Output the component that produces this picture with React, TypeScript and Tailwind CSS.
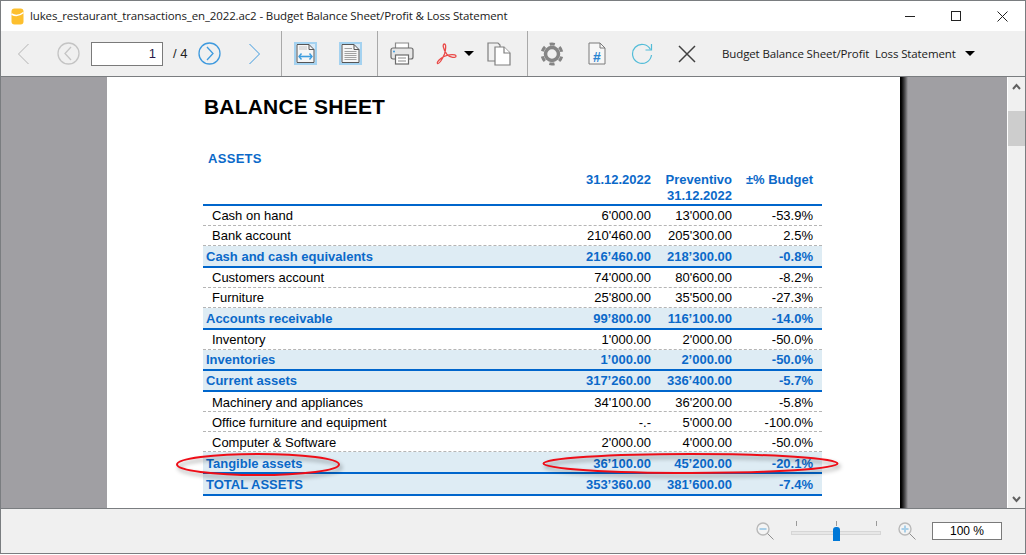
const rows = [
  { label: "Cash on hand", a: "6'000.00", b: "13'000.00", c: "-53.9%", kind: "plain", nudge: "" },
  { label: "Bank account", a: "210'460.00", b: "205'300.00", c: "2.5%", kind: "plain", nudge: "" },
  { label: "Cash and cash equivalents", a: "216’460.00", b: "218’300.00", c: "-0.8%", kind: "total", nudge: "pt-[2px]" },
  { label: "Customers account", a: "74'000.00", b: "80'600.00", c: "-8.2%", kind: "plain", nudge: "" },
  { label: "Furniture", a: "25'800.00", b: "35'500.00", c: "-27.3%", kind: "plain", nudge: "" },
  { label: "Accounts receivable", a: "99’800.00", b: "116’100.00", c: "-14.0%", kind: "total", nudge: "pt-[2px]" },
  { label: "Inventory", a: "1'000.00", b: "2'000.00", c: "-50.0%", kind: "plain", nudge: "" },
  { label: "Inventories", a: "1’000.00", b: "2’000.00", c: "-50.0%", kind: "short", nudge: "" },
  { label: "Current assets", a: "317’260.00", b: "336’400.00", c: "-5.7%", kind: "short", nudge: "" },
  { label: "Machinery and appliances", a: "34'100.00", b: "36'200.00", c: "-5.8%", kind: "plain", nudge: "pt-[2px]" },
  { label: "Office furniture and equipment", a: "-.-", b: "5'000.00", c: "-100.0%", kind: "plain", nudge: "pt-[2px]" },
  { label: "Computer & Software", a: "2'000.00", b: "4'000.00", c: "-50.0%", kind: "plain", nudge: "pt-[2px]" },
  { label: "Tangible assets", a: "36’100.00", b: "45’200.00", c: "-20.1%", kind: "total", nudge: "pt-[4px]" },
  { label: "TOTAL ASSETS", a: "353’360.00", b: "381’600.00", c: "-7.4%", kind: "total", nudge: "pt-[2px]" },
];

function Row({ r }: { r: (typeof rows)[number] }) {
  if (r.kind === "plain") {
    return (
      <div className={`flex h-[20px] items-center border-b border-dashed border-[#b5b5b5] pr-[9px] text-black ${r.nudge}`}>
        <div className="flex-1 pl-[9px]">{r.label}</div>
        <div className="w-[81px] text-right">{r.a}</div>
        <div className="w-[81px] text-right">{r.b}</div>
        <div className="w-[81px] text-right">{r.c}</div>
      </div>
    );
  }
  return (
    <div
      className={`flex items-center border-b-2 border-[#0066cc] bg-[#deecf4] pr-[9px] font-bold text-[#0b69c9] ${
        r.kind === "short" ? "h-[21px]" : "h-[22px]"
      } ${r.nudge}`}
    >
      <div className="flex-1 pl-[3px]">{r.label}</div>
      <div className="w-[81px] text-right">{r.a}</div>
      <div className="w-[81px] text-right">{r.b}</div>
      <div className="w-[81px] text-right">{r.c}</div>
    </div>
  );
}

function Sep() {
  return <div className="h-[45px] w-px bg-[#a9a9a9]" />;
}

function FitIcon({ width }: { width?: boolean }) {
  return (
    <div className="flex h-[23px] w-[23px] items-center justify-center border-2 border-[#a4d2f0] bg-[#d9eaf7]">
      <svg width="19" height="19" viewBox="0 0 19 19" fill="none">
        <path d="M1 0.5H13L18 5.5V18.5H1Z" fill="#f6f6f6" stroke="#555" />
        <path d="M13 0.5V5.5H18" stroke="#555" />
        {width ? (
          <>
            <path d="M3 3H11M3 5H11" stroke="#c8c8c8" />
            <path d="M3 12.5H16" stroke="#3d9ddf" strokeWidth="1.6" />
            <path d="M5.5 9.5L3 12.5L5.5 15.5M13.5 9.5L16 12.5L13.5 15.5" stroke="#3d9ddf" strokeWidth="1.4" />
          </>
        ) : (
          <path d="M3.5 4.5H11M3.5 7.5H15.5M3.5 9.5H15.5M3.5 11.5H15.5M3.5 13.5H15.5M3.5 15.5H15.5" stroke="#a2a2a2" />
        )}
      </svg>
    </div>
  );
}

function Caret() {
  return <div className="h-0 w-0 border-x-[5px] border-t-[5px] border-x-transparent border-t-black" />;
}

function ZoomIcon({ plus }: { plus?: boolean }) {
  return (
    <svg width="18" height="19" viewBox="0 0 18 19" fill="none">
      <circle cx="7" cy="7" r="6" fill="#f4f4f4" stroke="#b9b9b9" strokeWidth="1.4" />
      <path d="M3.5 7H10.5" stroke="#a9cfe8" strokeWidth="2" />
      {plus && <path d="M7 3.5V10.5" stroke="#a9cfe8" strokeWidth="2" />}
      <path d="M11.5 11.5L17.5 17.5" stroke="#8f8f8f" />
    </svg>
  );
}

export default function App() {
  return (
    <div className="relative h-[555px] w-[1026px] overflow-hidden bg-white font-['Liberation_Sans',sans-serif]">
      <div className="flex h-[554px] w-[1026px] flex-col border border-[#7a7d80] bg-white">
        {/* title bar */}
        <div className="flex h-[30px] shrink-0 items-center bg-white text-[#1a1a1a]">
          <svg className="ml-[10px]" width="13" height="17" viewBox="0 0 13 17">
            <rect x="0.5" y="0.5" width="12" height="16" rx="3" fill="#fdbf2d" />
            <path d="M0.5 6Q6.5 9.5 12.5 4.5" fill="none" stroke="#fff" strokeWidth="1.5" />
          </svg>
          <span className="ml-[6px] font-['Open_Sans',sans-serif] text-[11.5px] tracking-[-0.13px]">
            lukes_restaurant_transactions_en_2022.ac2 - Budget Balance Sheet/Profit &amp; Loss Statement
          </span>
          <div className="ml-auto flex items-center">
            <div className="h-px w-[10px] bg-[#222]" />
            <div className="ml-[36px] h-[10px] w-[10px] border border-[#222]" />
            <svg className="ml-[36px] mr-[17px]" width="11" height="11" viewBox="0 0 11 11" stroke="#222">
              <path d="M0.5 0.5L10.5 10.5M10.5 0.5L0.5 10.5" />
            </svg>
          </div>
        </div>

        {/* toolbar */}
        <div className="flex h-[45px] shrink-0 items-center bg-[#f0f0f0]">
          <svg className="ml-[17px]" width="12" height="24" viewBox="0 0 12 24" fill="none" stroke="#b3b3b3">
            <path d="M10.5 2L0.5 12L10.5 22" />
          </svg>
          <svg className="ml-[27px]" width="23" height="23" viewBox="0 0 23 23" fill="none" stroke="#c4c4c4" strokeWidth="1.3">
            <circle cx="11.5" cy="11.5" r="10.5" />
            <path d="M14 5L8 11.5L14 18" />
          </svg>
          <div className="ml-[11px] flex h-[24px] w-[72px] items-center justify-end border border-[#7a7a7a] bg-white pr-[6px] text-[13px] text-[#2b1a4a]">
            1
          </div>
          <span className="ml-[10px] w-[25px] text-[13px] text-[#222]">/ 4</span>
          <svg width="23" height="23" viewBox="0 0 23 23" fill="none" stroke="#3f9ade" strokeWidth="1.3">
            <circle cx="11.5" cy="11.5" r="10.5" />
            <path d="M9 5L15 11.5L9 18" />
          </svg>
          <svg className="ml-[28px]" width="12" height="24" viewBox="0 0 12 24" fill="none" stroke="#3f9ade">
            <path d="M0.5 2L10.5 12L0.5 22" />
          </svg>
          <div className="ml-[20px]"><Sep /></div>
          <div className="ml-[12px]"><FitIcon width /></div>
          <div className="ml-[22px]"><FitIcon /></div>
          <div className="ml-[15px]"><Sep /></div>
          <svg className="ml-[12px]" width="24" height="23" viewBox="0 0 24 23" fill="none" stroke="#6b6b6b" strokeWidth="1.2">
            <path d="M5.5 6V1H18.5V6" fill="#fff" stroke="#8a8a8a" />
            <rect x="1" y="6" width="22" height="11" rx="2" fill="#e6e6e6" />
            <rect x="5.5" y="13" width="13" height="9" fill="#fff" />
            <path d="M8 16H16M8 19H16" stroke="#8a8a8a" />
            <circle cx="4" cy="9.5" r="1" fill="#3f9ade" stroke="none" />
          </svg>
          <svg className="ml-[22px]" width="21" height="22" viewBox="0 0 21 22" fill="none" stroke="#ea4a48" strokeWidth="1.3">
            <path d="M8.5 1C6.5 1 6.5 5 11 11.5C14 14.5 20 15.5 20 13C20 11 13 11 8 13.5C4 15.5 0.5 19 1.5 20.5C3 21.5 6.5 16 8.5 11C9.5 8 10.5 1 8.5 1Z" />
          </svg>
          <div className="ml-[7px]"><Caret /></div>
          <svg className="ml-[13px]" width="24" height="24" viewBox="0 0 24 24" fill="#fff" stroke="#7f7f7f" strokeWidth="1.2">
            <path d="M1 1H11L13 3V19H1Z" fill="#f0f0f0" />
            <path d="M8 5H17L23 11V23H8Z" />
            <path d="M17 5V11H23" />
          </svg>
          <div className="ml-[16px]"><Sep /></div>
          <svg className="ml-[12px]" width="24" height="24" viewBox="0 0 24 24" fill="none">
            <circle cx="12" cy="12" r="6.5" stroke="#858585" strokeWidth="3.5" />
            <circle cx="12" cy="12" r="10" stroke="#858585" strokeWidth="3" strokeDasharray="5.2 5.27" transform="rotate(15 12 12)" />
          </svg>
          <svg className="ml-[24px]" width="18" height="23" viewBox="0 0 18 23" fill="#f7f7f7" stroke="#7a7a7a">
            <path d="M1 1H12L17 6V22H1Z" />
            <path d="M12 1V6H17" fill="none" />
            <text x="9" y="20" textAnchor="middle" fontSize="14" fontWeight="700" fill="#2a84d2" stroke="none" fontFamily="Liberation Sans">#</text>
          </svg>
          <svg className="ml-[25px]" width="22" height="22" viewBox="0 0 22 22" fill="none" stroke="#52bcd8" strokeWidth="1.2">
            <path d="M19.5 6.5A9.5 9.5 0 1 0 20.5 12" />
            <path d="M20.5 1V7H14.5" />
          </svg>
          <svg className="ml-[25px]" width="18" height="18" viewBox="0 0 18 18" fill="none" stroke="#404040" strokeWidth="1.5">
            <path d="M1 1L17 17M17 1L1 17" />
          </svg>
          <span className="ml-[26px] font-['Open_Sans',sans-serif] text-[11.5px] tracking-[-0.12px] whitespace-pre text-[#1a1a1a]">
            Budget Balance Sheet/Profit  Loss Statement
          </span>
          <div className="ml-[9px]"><Caret /></div>
        </div>

        {/* viewer */}
        <div className="flex min-h-0 flex-1 border-y border-[#7a7d80] bg-[#a09fa3]">
          <div className="flex min-w-0 flex-1 overflow-hidden pl-[106px]">
            <div className="h-full w-[793px] shrink-0 bg-white pl-[96px] text-[13px]">
              <h1 className="mt-[18px] h-[24px] pl-px text-[21px] leading-[24px] font-bold tracking-[0.2px] text-black">
                BALANCE SHEET
              </h1>
              <div className="mt-[32px] flex h-[16px] w-[619px] items-center pl-[5px] font-bold tracking-[0.3px] text-[#0b69c9]">
                ASSETS
              </div>
              <div className="w-[619px]">
                <div className="mt-[5px] flex h-[34px] border-b-2 border-[#0066cc] pr-[9px] leading-[16px] font-bold text-[#0b69c9]">
                  <div className="flex-1" />
                  <div className="w-[81px] text-right">31.12.2022</div>
                  <div className="w-[81px] text-right">Preventivo 31.12.2022</div>
                  <div className="w-[81px] text-right">±% Budget</div>
                </div>
                {rows.map((r) => (
                  <Row key={r.label} r={r} />
                ))}
              </div>
            </div>
            <div className="h-full w-[8px] shrink-0 bg-gradient-to-r from-black to-[#a09fa3]" />
          </div>
          <div className="flex w-[18px] shrink-0 flex-col border-l border-white bg-[#f0f0f0]">
            <div className="flex h-[17px] items-center justify-center pt-px">
              <svg width="9" height="7" viewBox="0 0 9 7" fill="none" stroke="#606060" strokeWidth="2">
                <path d="M1 6L4.5 2L8 6" />
              </svg>
            </div>
            <div className="mt-[17px] h-[35px] bg-[#cdcdcd]" />
            <div className="mt-auto flex h-[17px] items-center justify-center">
              <svg width="9" height="7" viewBox="0 0 9 7" fill="none" stroke="#606060" strokeWidth="2">
                <path d="M1 1L4.5 5L8 1" />
              </svg>
            </div>
          </div>
        </div>

        {/* status bar */}
        <div className="flex h-[44px] shrink-0 items-center bg-[#f0f0f0]">
          <div className="ml-[755px]"><ZoomIcon /></div>
          <div className="relative ml-[17px] h-[20px] w-[90px]">
            <div className="absolute top-[10px] h-[4px] w-[90px] border border-[#d6d6d6] bg-[#e7e7e7]" />
            <div className="absolute top-0 left-[5px] h-[5px] w-px bg-[#9a9a9a]" />
            <div className="absolute top-0 left-[45px] h-[5px] w-px bg-[#9a9a9a]" />
            <div className="absolute top-0 left-[85px] h-[5px] w-px bg-[#9a9a9a]" />
            <div className="absolute top-[6px] left-[42px] h-[14px] w-[7px] rounded-t-[3px] bg-[#0078d7]" />
          </div>
          <div className="ml-[17px]"><ZoomIcon plus /></div>
          <div className="ml-[16px] flex h-[18px] w-[70px] items-center justify-center border border-[#7a7a7a] bg-white text-[12px] text-black">
            100 %
          </div>
        </div>
      </div>

      {/* red highlight ellipses over the report */}
      <svg
        className="absolute top-[450px] left-[170px] drop-shadow-[2px_3px_2px_rgba(0,0,0,0.4)]"
        width="680"
        height="34"
        viewBox="0 0 680 34"
        fill="none"
      >
        <ellipse cx="88" cy="14.5" rx="81" ry="10.5" stroke="#ee0d17" strokeWidth="2" />
        <ellipse cx="520.5" cy="13.5" rx="147" ry="9.5" stroke="#ee0d17" strokeWidth="2" />
      </svg>
    </div>
  );
}
